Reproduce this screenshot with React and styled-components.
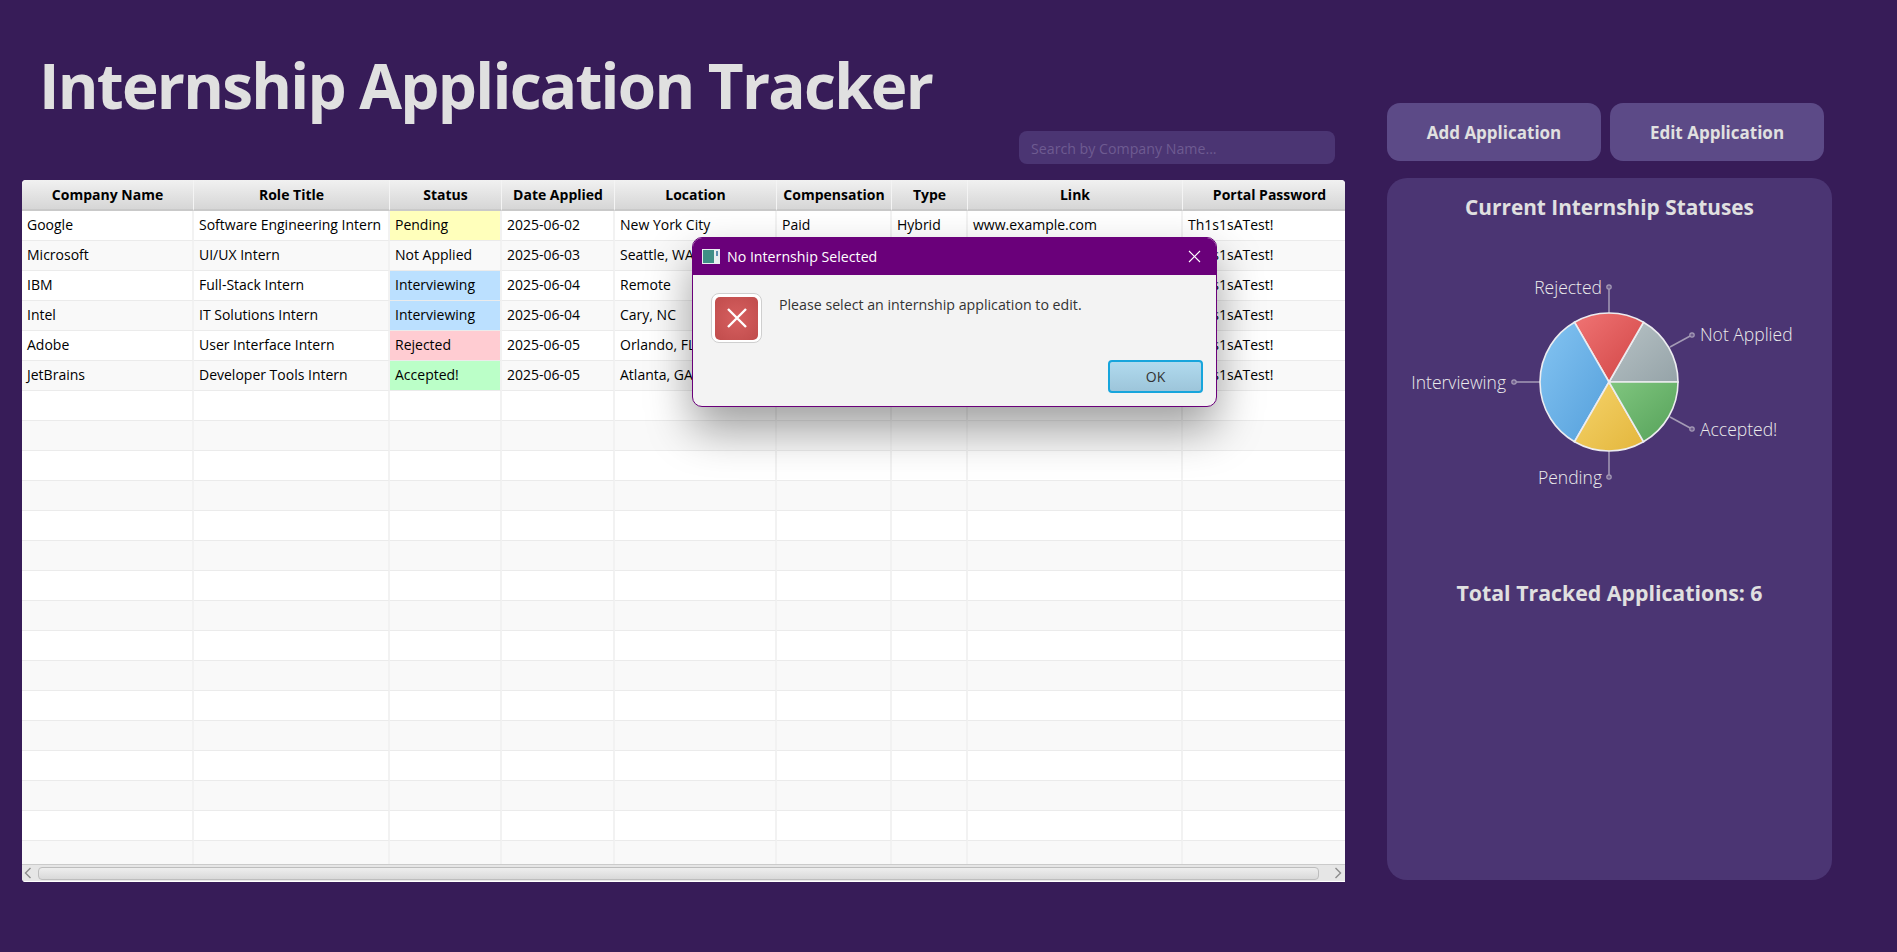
import React from "react";
import styled, { createGlobalStyle } from "styled-components";

const GlobalStyle = createGlobalStyle`
	html, body {
		margin: 0;
		padding: 0;
		background: #371c58;
	}
	* {
		box-sizing: border-box;
	}
`;

const uiFont = `"Open Sans", "Noto Sans", "Liberation Sans", sans-serif`;

const Page = styled.div`
	position: relative;
	display: flex;
	width: 1897px;
	height: 952px;
	padding: 0 0 0 22px;
	gap: 42px;
	overflow: hidden;
	background: #371c58;
	font-family: ${uiFont};
`;

const LeftColumn = styled.main`
	display: flex;
	flex-direction: column;
	width: 1323px;
`;

const Title = styled.h1`
	margin: 44px 0 0 17px;
	height: 87px;
	font-size: 62px;
	line-height: 82px;
	font-weight: 700;
	letter-spacing: -1.75px;
	color: #e0e0e0;
	white-space: nowrap;
`;

const Search = styled.div`
	align-self: flex-end;
	width: 316px;
	height: 33px;
	margin-right: 10px;
	padding: 1px 12px 0;
	border-radius: 8px;
	background: #4b3573;
	color: #6e5b91;
	font-size: 14.2px;
	line-height: 33px;
`;

const TableFrame = styled.section`
	display: flex;
	flex-direction: column;
	height: 702px;
	margin-top: 16px;
	border-radius: 4px 4px 0 4px;
	background: #fff;
	overflow: hidden;
`;

const Grid = styled.table`
	width: 1335px;
	border-collapse: separate;
	border-spacing: 0;
	table-layout: fixed;
	font-size: 14px;
	color: #000;
`;

const HeadCell = styled.th`
	height: 31px;
	padding: 0;
	border-right: 1px solid #f4f4f4;
	border-bottom: 2px solid #c9c9c9;
	background: linear-gradient(#f1f1f1, #d6d6d6);
	font-weight: 700;
	font-size: 14px;
	text-align: center;
	white-space: nowrap;
	overflow: hidden;
`;

const RowsClip = styled.div`
	flex: 1;
	overflow: hidden;
`;

const Row = styled.tr`
	height: 30px;
	background: ${p => (p.$odd ? "#f9f9f9" : "#fff")};
`;

const statusColors = {
	"Pending": "#ffffbb",
	"Interviewing": "#bbe0ff",
	"Rejected": "#ffccd2",
	"Accepted!": "#bbffc8",
};

const Cell = styled.td`
	height: 30px;
	padding: 0 0 2px 5px;
	border-right: 2px solid #f2f2f2;
	border-bottom: 1px solid #ebebeb;
	background: ${p => statusColors[p.$status] || "transparent"};
	white-space: nowrap;
	overflow: hidden;
`;

const ScrollBar = styled.div`
	display: flex;
	align-items: center;
	justify-content: space-between;
	height: 18px;
	padding: 0 3px 0 2px;
	border-top: 1px solid #cbcbcb;
	border-bottom: 1px solid #fff;
	background: #e6e6e6;
`;

const ScrollThumb = styled.div`
	flex: 1;
	height: 13px;
	margin: 0 15px 0 6px;
	border: 1px solid #bdbdbd;
	border-radius: 4px;
	background: linear-gradient(#eeeeee, #d9d9d9);
`;

const SideColumn = styled.aside`
	display: flex;
	flex-direction: column;
	width: 445px;
	padding-top: 103px;
`;

const ButtonRow = styled.div`
	display: flex;
	gap: 9px;
`;

const ActionButton = styled.button`
	width: 214px;
	height: 58px;
	padding: 0;
	border: 0;
	border-radius: 13px;
	background: #5c4a87;
	color: #e0e0e0;
	font-family: inherit;
	font-size: 17px;
	font-weight: 700;
`;

const StatsPanel = styled.section`
	display: flex;
	flex-direction: column;
	align-items: center;
	height: 702px;
	margin-top: 17px;
	padding-top: 12px;
	border-radius: 20px;
	background: #4b3573;
	color: #e0e0e0;
`;

const PanelHeading = styled.h2`
	margin: 0;
	font-size: 20.8px;
	line-height: 34px;
	font-weight: 700;
	white-space: nowrap;
`;

const Total = styled.div`
	margin-top: 44px;
	font-size: 21.3px;
	line-height: 34px;
	font-weight: 700;
	white-space: nowrap;
`;

const Dialog = styled.div`
	position: absolute;
	left: 692px;
	top: 237px;
	display: flex;
	flex-direction: column;
	width: 525px;
	height: 170px;
	border: 1px solid #6a007a;
	border-radius: 10px;
	background: #f3f3f3;
	box-shadow: 0 22px 45px rgba(0, 0, 0, 0.38);
	overflow: hidden;
`;

const DialogBar = styled.div`
	display: flex;
	align-items: center;
	gap: 7px;
	height: 37px;
	padding: 0 15px 0 9px;
	background: #6a007a;
	color: #fff;
	font-size: 14.2px;
`;

const DialogTitle = styled.span`
	flex: 1;
`;

const DialogBody = styled.div`
	position: relative;
	display: flex;
	flex: 1;
	gap: 17px;
	padding: 18px 0 0 18px;
`;

const ErrorBadge = styled.div`
	display: flex;
	align-items: center;
	justify-content: center;
	width: 51px;
	height: 50px;
	border: 1px solid #cfcfcf;
	border-radius: 8px;
	background: #fff;
`;

const ErrorFace = styled.div`
	display: flex;
	align-items: center;
	justify-content: center;
	width: 43px;
	height: 43px;
	border-radius: 5px;
	background: radial-gradient(circle, #d65f5f, #c04c4c);
`;

const Message = styled.p`
	margin: 0;
	padding-top: 2px;
	color: #333;
	font-size: 14.2px;
	line-height: 20px;
`;

const OkButton = styled.button`
	position: absolute;
	right: 13px;
	bottom: 13px;
	width: 95px;
	height: 33px;
	padding: 0;
	border: 2px solid #17a5dc;
	border-radius: 4px;
	background: linear-gradient(#b0daee, #9dc5da);
	color: #333;
	font-family: inherit;
	font-size: 14px;
`;

const columns = [
	["Company Name", 172],
	["Role Title", 196],
	["Status", 112],
	["Date Applied", 113],
	["Location", 162],
	["Compensation", 115],
	["Type", 76],
	["Link", 215],
	["Portal Password", 174],
];

const applications = [
	["Google", "Software Engineering Intern", "Pending", "2025-06-02", "New York City", "Paid", "Hybrid", "www.example.com", "Th1s1sATest!"],
	["Microsoft", "UI/UX Intern", "Not Applied", "2025-06-03", "Seattle, WA", "Paid", "Remote", "www.example.com", "Th1s1sATest!"],
	["IBM", "Full-Stack Intern", "Interviewing", "2025-06-04", "Remote", "Paid", "Remote", "www.example.com", "Th1s1sATest!"],
	["Intel", "IT Solutions Intern", "Interviewing", "2025-06-04", "Cary, NC", "Paid", "Onsite", "www.example.com", "Th1s1sATest!"],
	["Adobe", "User Interface Intern", "Rejected", "2025-06-05", "Orlando, FL", "Paid", "Hybrid", "www.example.com", "Th1s1sATest!"],
	["JetBrains", "Developer Tools Intern", "Accepted!", "2025-06-05", "Atlanta, GA", "Paid", "Hybrid", "www.example.com", "Th1s1sATest!"],
];

const emptyRow = columns.map(() => "");
const rows = [...applications, ...Array.from({ length: 16 }, () => emptyRow)];

// pie geometry, angles counter-clockwise from 3 o'clock like the chart they came from
const PIE = { x: 222, y: 150, r: 69 };
const slices = [
	{ id: "notApplied", from: 0, to: 60, light: "#b8c3c6", dark: "#95a3a8" },
	{ id: "rejected", from: 60, to: 120, light: "#f07474", dark: "#d04444" },
	{ id: "interviewing", from: 120, to: 240, light: "#84c4f2", dark: "#549fdb" },
	{ id: "pending", from: 240, to: 300, light: "#f6d46c", dark: "#e3b63c" },
	{ id: "accepted", from: 300, to: 360, light: "#80c67f", dark: "#55a159" },
];

function polar(angle, radius = PIE.r) {
	const rad = (angle * Math.PI) / 180;
	return [PIE.x + radius * Math.cos(rad), PIE.y - radius * Math.sin(rad)];
}

function slicePath({ from, to }) {
	const [x1, y1] = polar(from);
	const [x2, y2] = polar(to);
	return `M${PIE.x} ${PIE.y} L${x1} ${y1} A${PIE.r} ${PIE.r} 0 0 0 ${x2} ${y2} Z`;
}

const leaders = [
	{ text: "Rejected", from: [222, 81], to: [222, 55], textX: 215, textY: 62, anchor: "end" },
	{ text: "Not Applied", from: [283, 115], to: [305, 103], textX: 313, textY: 109, anchor: "start" },
	{ text: "Interviewing", from: [153, 150], to: [127, 150], textX: 119, textY: 157, anchor: "end" },
	{ text: "Pending", from: [222, 219], to: [222, 245], textX: 215, textY: 252, anchor: "end" },
	{ text: "Accepted!", from: [283, 185], to: [305, 197], textX: 313, textY: 204, anchor: "start" },
];

function PieChart() {
	return (
		<svg width="445" height="300" style={{ display: "block", marginTop: 8 }}>
			<defs>
				{slices.map(s => (
					<linearGradient key={s.id} id={s.id} x1="0" y1="0" x2="1" y2="1">
						<stop offset="0" stopColor={s.light} />
						<stop offset="1" stopColor={s.dark} />
					</linearGradient>
				))}
			</defs>
			{leaders.map(l => (
				<g key={l.text}>
					<line x1={l.from[0]} y1={l.from[1]} x2={l.to[0]} y2={l.to[1]} stroke="#a59bb6" strokeWidth="1.5" />
					<circle cx={l.to[0]} cy={l.to[1]} r="2.2" fill="#6f5d8e" stroke="#a59bb6" strokeWidth="1.2" />
					<text x={l.textX} y={l.textY} textAnchor={l.anchor} fontSize="17.5" fontWeight="300" fill="#ececec">{l.text}</text>
				</g>
			))}
			{slices.map(s => (
				<path key={s.id} d={slicePath(s)} fill={`url(#${s.id})`} stroke="#ececf0" strokeWidth="1.6" />
			))}
		</svg>
	);
}

function Chevron({ left }) {
	return (
		<svg width="8" height="12" viewBox="0 0 8 12" fill="none" stroke="#8c8c8c" strokeWidth="1.4">
			<path d={left ? "M6.5 1 L1.5 6 L6.5 11" : "M1.5 1 L6.5 6 L1.5 11"} />
		</svg>
	);
}

export default function App() {
	return (
		<Page>
			<GlobalStyle />
			<LeftColumn>
				<Title>Internship Application Tracker</Title>
				<Search>Search by Company Name...</Search>
				<TableFrame>
					<Grid>
						<colgroup>
							{columns.map(([name, width]) => <col key={name} style={{ width }} />)}
						</colgroup>
						<thead>
							<tr>
								{columns.map(([name]) => <HeadCell key={name}>{name}</HeadCell>)}
							</tr>
						</thead>
					</Grid>
					<RowsClip>
						<Grid>
							<colgroup>
								{columns.map(([name, width]) => <col key={name} style={{ width }} />)}
							</colgroup>
							<tbody>
								{rows.map((row, r) => (
									<Row key={r} $odd={r % 2 === 1}>
										{row.map((value, c) => (
											<Cell key={c} $status={c === 2 ? value : undefined}>{value}</Cell>
										))}
									</Row>
								))}
							</tbody>
						</Grid>
					</RowsClip>
					<ScrollBar>
						<Chevron left />
						<ScrollThumb />
						<Chevron />
					</ScrollBar>
				</TableFrame>
			</LeftColumn>

			<SideColumn>
				<ButtonRow>
					<ActionButton>Add Application</ActionButton>
					<ActionButton>Edit Application</ActionButton>
				</ButtonRow>
				<StatsPanel>
					<PanelHeading>Current Internship Statuses</PanelHeading>
					<PieChart />
					<Total>Total Tracked Applications: 6</Total>
				</StatsPanel>
			</SideColumn>

			<Dialog>
				<DialogBar>
					<svg width="18" height="15" viewBox="0 0 18 15">
						<rect width="18" height="15" fill="#e8eef0" />
						<rect x="1" y="1" width="11" height="13" fill="#3f8f86" />
						<rect x="14" y="2" width="2" height="5" fill="#5c8fb0" />
					</svg>
					<DialogTitle>No Internship Selected</DialogTitle>
					<svg width="13" height="13" viewBox="0 0 13 13" stroke="#fff" strokeWidth="1.1">
						<path d="M1 1 L12 12 M12 1 L1 12" />
					</svg>
				</DialogBar>
				<DialogBody>
					<ErrorBadge>
						<ErrorFace>
							<svg width="20" height="20" viewBox="0 0 20 20" stroke="#fff" strokeWidth="2.4">
								<path d="M1 1 L19 19 M19 1 L1 19" />
							</svg>
						</ErrorFace>
					</ErrorBadge>
					<Message>Please select an internship application to edit.</Message>
					<OkButton>OK</OkButton>
				</DialogBody>
			</Dialog>
		</Page>
	);
}
